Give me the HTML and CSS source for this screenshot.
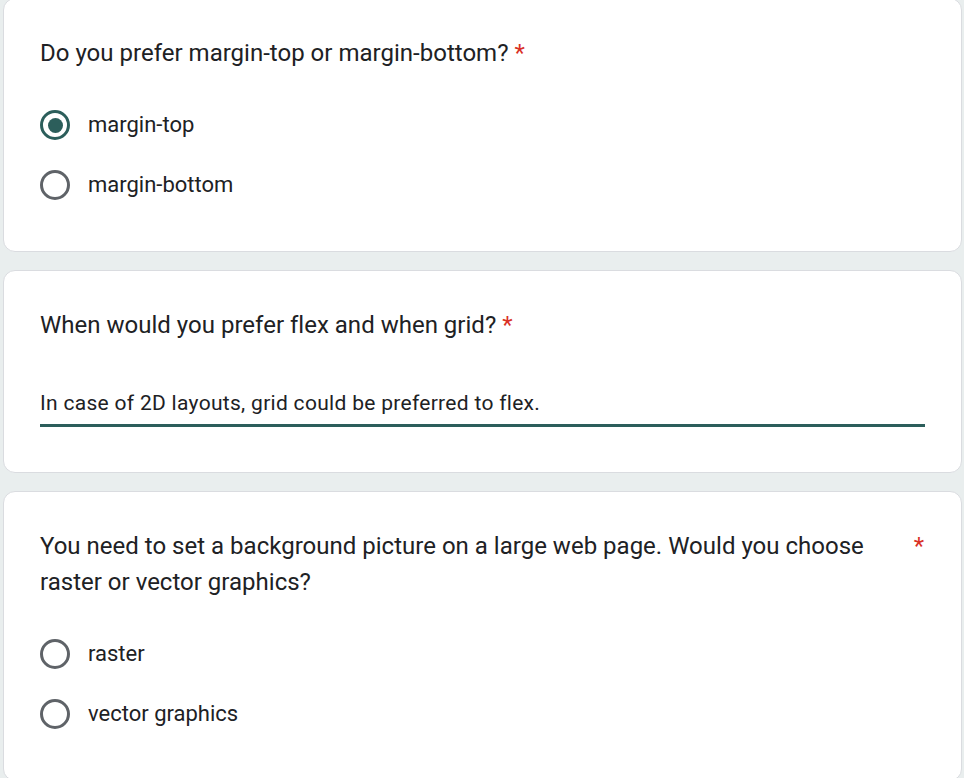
FILE: index.html
```html
<!DOCTYPE html>
<html lang="en">
<head>
<meta charset="utf-8">
<title>Form</title>
<link rel="stylesheet" href="styles.css">
</head>
<body>
<div class="page">
  <section class="card card-first">
    <div class="title-row">
      <div class="title">Do you prefer margin-top or margin-bottom? <span class="req">*</span></div>
    </div>
    <div class="options">
      <label class="option"><span class="radio checked"></span><span class="label">margin-top</span></label>
      <label class="option"><span class="radio"></span><span class="label">margin-bottom</span></label>
    </div>
  </section>
  <section class="card card-text">
    <div class="title-row">
      <div class="title">When would you prefer flex and when grid? <span class="req">*</span></div>
    </div>
    <div class="answer">In case of 2D layouts, grid could be preferred to flex.</div>
  </section>
  <section class="card">
    <div class="title-row split">
      <div class="title">You need to set a background picture on a large web page. Would you choose raster or vector graphics?</div>
      <span class="req req-side">*</span>
    </div>
    <div class="options">
      <label class="option"><span class="radio"></span><span class="label">raster</span></label>
      <label class="option"><span class="radio"></span><span class="label">vector graphics</span></label>
    </div>
  </section>
</div>
</body>
</html>
```

FILE: styles.css
```css
html, body {
  margin: 0;
  padding: 0;
  background: #e9eeee;
  overflow: hidden;
}
body {
  font-family: Roboto, "Liberation Sans", Arial, sans-serif;
  color: #202124;
}
.page {
  margin: -2px 2px 0 3px;
  display: flex;
  flex-direction: column;
  gap: 18px;
}
.card {
  background: #fff;
  border: 1px solid #dadce0;
  border-radius: 12px;
  padding: 36px 36px 36px 36px;
}
.card-first {
  padding-bottom: 36px;
}
.card-text {
  padding-bottom: 45px;
}
.title-row {
  display: flex;
  align-items: flex-start;
}
.title-row.split {
  gap: 40px;
}
.title {
  flex: 1;
  font-size: 24px;
  line-height: 36px;
  letter-spacing: 0.01px;
}
.req {
  color: #d93025;
  font-size: 24px;
  line-height: 36px;
}
.req-side {
  padding-right: 1px;
}
.options {
  margin-top: 24px;
  display: flex;
  flex-direction: column;
}
.option {
  height: 60px;
  display: flex;
  align-items: center;
  gap: 18px;
}
.radio {
  width: 30px;
  height: 30px;
  box-sizing: border-box;
  border: 3px solid #5f6368;
  border-radius: 50%;
  display: flex;
  align-items: center;
  justify-content: center;
  flex: none;
}
.radio.checked {
  border-color: #2c5e5b;
}
.radio.checked::after {
  content: "";
  width: 15px;
  height: 15px;
  border-radius: 50%;
  background: #2c5e5b;
}
.label {
  font-size: 22px;
  line-height: 30px;
}
.answer {
  margin-top: 24px;
  padding: 21px 0 6px;
  font-size: 21px;
  letter-spacing: 0.3px;
  line-height: 30px;
  border-bottom: 3px solid #2c5e5b;
}
```
